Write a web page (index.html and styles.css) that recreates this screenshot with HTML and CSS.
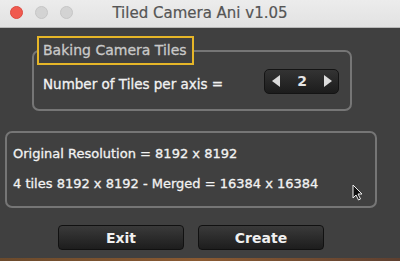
FILE: index.html
```html
<!DOCTYPE html>
<html lang="en">
<head>
  <meta charset="UTF-8">
  <title>Tiled Camera Ani v1.05</title>
  <link rel="stylesheet" href="styles.css">
</head>
<body>
  <div class="window">
    <header class="titlebar">
      <div class="lights">
        <span class="light red"></span>
        <span class="light"></span>
        <span class="light"></span>
      </div>
      <div class="title">Tiled Camera Ani v1.05</div>
      <div></div>
    </header>

    <main class="content">
      <fieldset class="group tiles">
        <legend>Baking Camera Tiles</legend>
        <div class="row">
          <span>Number of Tiles per axis =</span>
          <div class="spinner">
            <span class="arrow left"></span>
            <span class="value">2</span>
            <span class="arrow right"></span>
          </div>
        </div>
      </fieldset>

      <div class="group info">
        <div class="line">Original Resolution = 8192 x 8192</div>
        <div class="line">4 tiles 8192 x 8192 - Merged = 16384 x 16384</div>
      </div>

      <div class="buttons">
        <button>Exit</button>
        <button>Create</button>
      </div>
    </main>

    <div class="desk"></div>

    <svg class="cursor" width="11" height="17" viewBox="0 0 11 17">
      <path d="M1 1 L1 14 L4 11 L6.5 16 L8.5 15 L6 10 L10 10 Z" fill="#111" stroke="#eee" stroke-width="1"/>
    </svg>
  </div>
</body>
</html>
```

FILE: styles.css
```css
* {
  margin: 0;
  padding: 0;
  box-sizing: border-box;
}

body {
  font-family: 'DejaVu Sans', sans-serif;
  background: #404040;
  width: 400px;
  height: 261px;
  overflow: hidden;
}

.window {
  position: relative;
  height: 261px;
  display: flex;
  flex-direction: column;
}

.titlebar {
  height: 28px;
  background: linear-gradient(#ececec, #e2e2e2);
  border-bottom: 1px solid #b8b8b8;
  display: grid;
  grid-template-columns: 1fr auto 1fr;
  align-items: center;
}

.lights {
  display: flex;
  gap: 12px;
  padding-left: 10px;
  margin-top: -2px;
}

.light {
  width: 13px;
  height: 13px;
  border-radius: 50%;
  background: #d3d3d3;
  border: 1px solid #c6c6c6;
}

.light.red {
  background: #f05a4f;
  border-color: #dd4a40;
}

.title {
  font-size: 15px;
  color: #555;
  margin-top: -2px;
  -webkit-text-stroke: 0.2px #555;
}

.content {
  flex-grow: 1;
  display: flex;
  flex-direction: column;
}

.group {
  border: 2px solid #767676;
  border-radius: 7px;
  color: #f2f2f2;
  font-size: 13px;
  -webkit-text-stroke: 0.3px #f2f2f2;
}

.tiles {
  margin: 8px 0 0 32px;
  width: 320px;
  padding: 0 11px 7px 3px;
}

.tiles legend {
  border: 2px solid #e6b628;
  padding: 0 5px 0 4px;
  height: 29px;
  line-height: 25px;
  font-size: 14px;
  color: #c9c9c9;
  -webkit-text-stroke: 0.3px #c9c9c9;
}

.row {
  height: 37px;
  padding-left: 6px;
  display: flex;
  align-items: center;
  justify-content: space-between;
  font-size: 13.5px;
}

.spinner {
  width: 75px;
  height: 25px;
  margin-top: -5px;
  border: 1px solid #141414;
  border-radius: 5px;
  background: linear-gradient(#333, #1c1c1c);
  display: flex;
  align-items: center;
  justify-content: space-between;
  padding: 0 6px 0 7px;
}

.spinner .value {
  font-size: 14px;
  font-weight: bold;
  color: #e6e6e6;
  -webkit-text-stroke: 0;
}

.arrow {
  width: 0;
  height: 0;
  border-top: 6px solid transparent;
  border-bottom: 6px solid transparent;
}

.arrow.left {
  border-right: 8px solid #dcdcdc;
}

.arrow.right {
  border-left: 8px solid #dcdcdc;
}

.info {
  margin: 20px 0 0 5px;
  width: 372px;
  height: 77px;
  padding: 6px 0 0 6px;
}

.line {
  height: 30px;
  line-height: 30px;
}

.buttons {
  display: flex;
  gap: 14px;
  margin: 17px 0 0 58px;
}

.buttons button {
  width: 126px;
  height: 25px;
  border: 1px solid #111;
  border-radius: 4px;
  background: linear-gradient(#3a3a3a, #1d1d1d);
  color: #f0f0f0;
  font-family: 'DejaVu Sans', sans-serif;
  font-size: 14px;
  font-weight: bold;
}

.desk {
  height: 3px;
  background: linear-gradient(90deg, #6b4a2c, #8a5a32, #5e4030);
}

.cursor {
  position: absolute;
  left: 352px;
  top: 184px;
}
```
